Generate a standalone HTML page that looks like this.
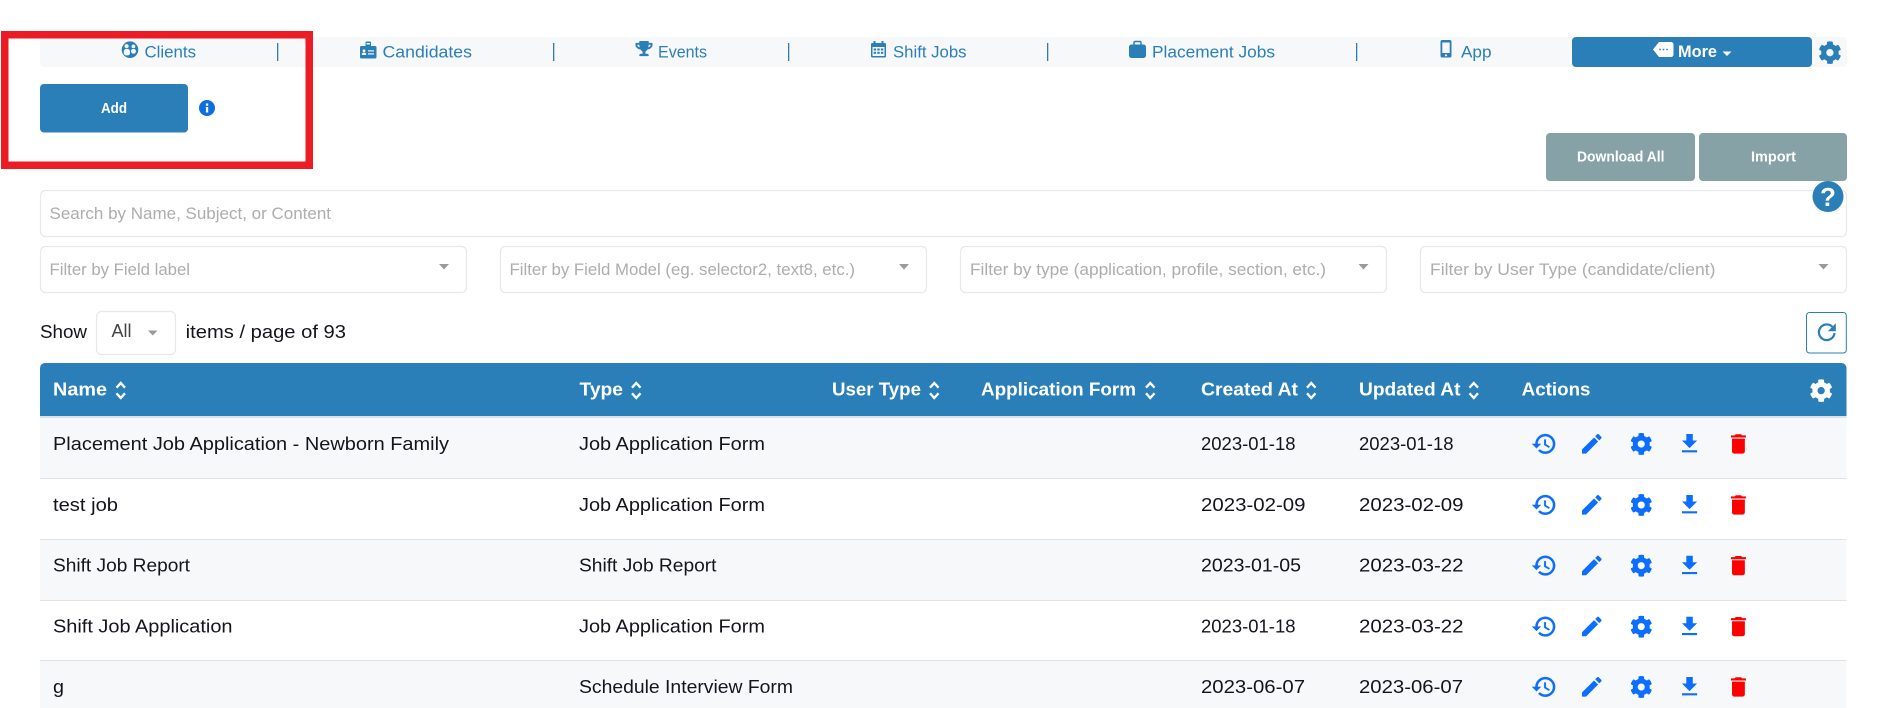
<!DOCTYPE html>
<html lang="en">
<head>
<meta charset="utf-8">
<title>Forms</title>
<style>
html,body{margin:0;padding:0;background:#fff;width:1885px;height:708px;overflow:hidden}
svg{display:block}
text{font-family:"Liberation Sans",sans-serif}
.nav{font-size:17px;fill:#2a7fb8}
.ph{font-size:17px;fill:#adadad}
.b{font-size:18px;fill:#14141c}
.h{font-size:18px;font-weight:700;fill:#fff}
.w{font-size:14.500px;font-weight:700;fill:#fff}
.s{fill:none;stroke:#fff;stroke-width:2.300}
.bd{fill:#fff;stroke:#e6e8ec;stroke-width:1.200}
</style>
</head>
<body>
<svg xmlns="http://www.w3.org/2000/svg" width="1885" height="708" viewBox="0 0 1885 708">
<defs>
<path id="cog" d="M487.4 315.7l-42.6-24.6c4.3-23.2 4.3-47 0-70.2l42.6-24.6c4.9-2.8 7.1-8.6 5.5-14-11.1-35.6-30-67.8-54.7-94.6-3.8-4.1-10-5.1-14.8-2.3L380.8 110c-17.9-15.4-38.5-27.3-60.8-35.1V25.8c0-5.6-3.9-10.5-9.4-11.7-36.7-8.2-74.3-7.8-109.2 0-5.5 1.2-9.4 6.1-9.4 11.7V75c-22.2 7.9-42.8 19.8-60.8 35.1L88.7 85.5c-4.9-2.8-11-1.9-14.8 2.3-24.7 26.7-43.6 58.9-54.7 94.6-1.7 5.4.6 11.2 5.5 14L67.3 221c-4.3 23.2-4.3 47 0 70.2l-42.6 24.6c-4.9 2.8-7.1 8.6-5.5 14 11.1 35.6 30 67.8 54.7 94.6 3.8 4.1 10 5.1 14.8 2.3l42.6-24.6c17.9 15.4 38.5 27.3 60.8 35.1v49.2c0 5.6 3.9 10.5 9.4 11.7 36.7 8.2 74.3 7.8 109.2 0 5.5-1.2 9.4-6.1 9.4-11.7v-49.2c22.2-7.9 42.8-19.8 60.8-35.1l42.6 24.6c4.9 2.8 11 1.9 14.8-2.3 24.7-26.7 43.6-58.9 54.7-94.6 1.5-5.5-.7-11.3-5.6-14.1zM256 336c-44.1 0-80-35.9-80-80s35.9-80 80-80 80 35.9 80 80-35.9 80-80 80z"/>
<g id="acts">
<path transform="translate(1531 430.7) scale(1.1)" fill="#0d6efd" stroke="#0d6efd" stroke-width=".3" d="M13 3c-4.97 0-9 4.03-9 9H1l3.89 3.89.07.14L9 12H6c0-3.87 3.13-7 7-7s7 3.13 7 7-3.13 7-7 7c-1.93 0-3.68-.79-4.94-2.06l-1.42 1.42C8.27 19.99 10.51 21 13 21c4.97 0 9-4.03 9-9s-4.03-9-9-9zm-1 5v5l4.28 2.54.72-1.21-3.5-2.08V8H12z"/>
<path transform="translate(1578.7 430.7) scale(1.09)" fill="#0d6efd" d="M3 17.25V21h3.75L17.81 9.94l-3.75-3.75L3 17.25zM20.71 7.04c.39-.39.39-1.02 0-1.41l-2.34-2.34c-.39-.39-1.02-.39-1.41 0l-1.83 1.83 3.75 3.75 1.83-1.83z"/>
<use href="#cog" transform="translate(1630 432.7) scale(.044)" fill="#0d6efd"/>
<path transform="translate(1676.6 430.8) scale(1.08)" fill="#0d6efd" d="M19 9h-4V3H9v6H5l7 7 7-7zM5 18v2h14v-2H5z"/>
<path transform="translate(1725.6 431.1) scale(1.07)" fill="#ff0000" d="M6 19c0 1.1.9 2 2 2h8c1.1 0 2-.9 2-2V7H6v12zM19 4h-3.5l-1-1h-5l-1 1H5v2h14V4z"/>
</g>
<g id="sort"><path class="s" d="M1 7.2 5.25 2.5 9.5 7.2M1 12.8 5.25 17.5 9.5 12.8"/></g>
</defs>

<!-- nav -->
<rect x="40" y="37" width="1807" height="30" rx="4" fill="#f7f8fa"/>
<g fill="#2a7fb8">
<rect x="277" y="43" width="1.3" height="18"/>
<rect x="553" y="43" width="1.3" height="18"/>
<rect x="788" y="43" width="1.3" height="18"/>
<rect x="1047" y="43" width="1.3" height="18"/>
<rect x="1356" y="43" width="1.3" height="18"/>
<!-- clients -->
<circle cx="130" cy="49.7" r="8.3"/>
<!-- candidates -->
<rect x="360" y="46" width="16.5" height="12.5" rx="1.5"/>
<rect x="365.5" y="41.5" width="5.5" height="6" rx="1"/>
<!-- trophy -->
<path transform="translate(635.5 41) scale(.0295)" fill-rule="evenodd" d="M552 64H448V24c0-13.3-10.7-24-24-24H152c-13.3 0-24 10.7-24 24v40H24C10.7 64 0 74.7 0 88v56c0 35.7 22.5 72.4 61.9 100.7 31.5 22.7 69.8 37.1 110 41.7C203.3 338.5 240 360 240 360v72h-48c-35.3 0-64 20.7-64 56v12c0 6.6 5.4 12 12 12h296c6.6 0 12-5.4 12-12v-12c0-35.3-28.7-56-64-56h-48v-72s36.7-21.5 68.1-73.6c40.3-4.6 78.6-19 110-41.7 39.3-28.3 61.9-65 61.9-100.7V88c0-13.3-10.7-24-24-24zM99.3 192.8C74.9 175.2 64 155.6 64 144v-16h64.2c1 32.6 5.8 61.2 12.8 86.2-15.1-5.2-29.2-12.4-41.7-21.4zM512 144c0 16.1-17.7 36.1-35.3 48.8-12.7 9.1-26.9 16.3-42 21.5 7-25 11.8-53.6 12.8-86.3H512v16z"/>
<!-- calendar -->
<rect x="871" y="43" width="15" height="14.5" rx="1.5"/>
<rect x="873.5" y="41" width="2" height="3"/>
<rect x="881.5" y="41" width="2" height="3"/>
<!-- briefcase -->
<rect x="1129" y="44.5" width="17" height="13.5" rx="2.5"/>
<path d="M1134 45v-2.3c0-.7.5-1.2 1.2-1.2h4.6c.7 0 1.2.5 1.2 1.2v2.3" fill="none" stroke="#2a7fb8" stroke-width="1.4"/>
<!-- mobile -->
<rect x="1440.5" y="40" width="11" height="17.5" rx="1.8"/>
</g>
<!-- clients cutouts -->
<g fill="#f7f8fa">
<circle cx="126.6" cy="46.2" r="2.1"/><circle cx="133.4" cy="46.4" r="1.9"/>
<rect x="123.8" y="49" width="6.2" height="6.4" rx="2.4"/>
<rect x="131" y="49" width="4.9" height="4.6" rx="2.1"/>
<!-- badge -->
<rect x="366.500" y="43" width="3.500" height="1.500"/>
<circle cx="364" cy="50.800" r="1.400"/>
<path d="M361.800 55v-1c0-.8.8-1.400 2.200-1.400s2.200.6 2.200 1.400v1z"/>
<rect x="368" y="50.300" width="6" height="1.200"/>
<rect x="368" y="53.300" width="6" height="1.200"/>
<!-- calendar cells -->
<rect x="872.500" y="47" width="12" height="9"/>
<!-- mobile screen -->
<rect x="1442.300" y="42.500" width="7.400" height="10.500"/>
<circle cx="1446" cy="55.300" r="1.100"/>
</g>
<g fill="#2a7fb8">
<rect x="873.700" y="48.500" width="2.400" height="2"/><rect x="877.300" y="48.500" width="2.400" height="2"/><rect x="880.900" y="48.500" width="2.400" height="2"/>
<rect x="873.700" y="51.800" width="2.400" height="2"/><rect x="877.300" y="51.800" width="2.400" height="2"/><rect x="880.900" y="51.800" width="2.400" height="2"/>
</g>
<text class="nav" x="144.500" y="57.500" textLength="51.500" lengthAdjust="spacingAndGlyphs">Clients</text>
<text class="nav" x="382.500" y="57.500" textLength="89.500" lengthAdjust="spacingAndGlyphs">Candidates</text>
<text class="nav" x="658" y="57.500" textLength="49" lengthAdjust="spacingAndGlyphs">Events</text>
<text class="nav" x="893" y="57.500" textLength="73.500" lengthAdjust="spacingAndGlyphs">Shift Jobs</text>
<text class="nav" x="1152" y="57.500" textLength="123" lengthAdjust="spacingAndGlyphs">Placement Jobs</text>
<text class="nav" x="1461" y="57.500" textLength="30.500" lengthAdjust="spacingAndGlyphs">App</text>

<!-- more -->
<rect x="1572" y="37" width="240" height="30" rx="4" fill="#2a7fb8"/>
<path fill="#fff" d="M1653 49.500 1659 42h12c1.400 0 2.500 1.100 2.500 2.500v10c0 1.400-1.100 2.500-2.500 2.500h-12z"/>
<g fill="#2a7fb8"><circle cx="1660" cy="49.500" r=".9"/><circle cx="1663.500" cy="49.500" r=".9"/><circle cx="1667" cy="49.500" r=".9"/></g>
<text x="1678" y="57" font-size="17" font-weight="700" fill="#fff" textLength="39" lengthAdjust="spacingAndGlyphs">More</text>
<path fill="#fff" d="M1722.500 51.500h9l-4.500 4.500z"/>
<use href="#cog" transform="translate(1818.300 41) scale(.0455)" fill="#2a7fb8"/>

<!-- add -->
<rect x="40" y="84" width="148" height="48.500" rx="4" fill="#2a7fb8"/>
<text class="w" x="101" y="113" textLength="26" lengthAdjust="spacingAndGlyphs">Add</text>
<circle cx="207" cy="108" r="8" fill="#0d6ede"/>
<rect x="205.900" y="107" width="2.300" height="5.500" fill="#fff"/>
<rect x="205.900" y="103.500" width="2.300" height="2.300" fill="#fff"/>

<!-- download/import -->
<rect x="1546" y="133" width="149" height="48" rx="4" fill="#86a2a7"/>
<rect x="1699" y="133" width="148" height="48" rx="4" fill="#86a2a7"/>
<text class="w" x="1577" y="161.500" textLength="87.500" lengthAdjust="spacingAndGlyphs">Download All</text>
<text class="w" x="1751" y="161.500" textLength="45" lengthAdjust="spacingAndGlyphs">Import</text>

<!-- search -->
<rect class="bd" x="40.500" y="190.500" width="1806" height="46" rx="5"/>
<text class="ph" x="49.500" y="219" textLength="281.500" lengthAdjust="spacingAndGlyphs">Search by Name, Subject, or Content</text>
<ellipse cx="1828" cy="196.500" rx="15.500" ry="15.500" fill="#2a7fb8"/>
<text x="1828" y="206" text-anchor="middle" font-size="26" font-weight="700" fill="#fff">?</text>

<!-- filters -->
<rect class="bd" x="40.500" y="246.500" width="426" height="46" rx="5"/>
<rect class="bd" x="500.500" y="246.500" width="426" height="46" rx="5"/>
<rect class="bd" x="960.500" y="246.500" width="426" height="46" rx="5"/>
<rect class="bd" x="1420.500" y="246.500" width="426" height="46" rx="5"/>
<text class="ph" x="49.500" y="275" textLength="140.500" lengthAdjust="spacingAndGlyphs">Filter by Field label</text>
<text class="ph" x="509.500" y="275" textLength="345.500" lengthAdjust="spacingAndGlyphs">Filter by Field Model (eg. selector2, text8, etc.)</text>
<text class="ph" x="970" y="275" textLength="356" lengthAdjust="spacingAndGlyphs">Filter by type (application, profile, section, etc.)</text>
<text class="ph" x="1430" y="275" textLength="285.500" lengthAdjust="spacingAndGlyphs">Filter by User Type (candidate/client)</text>
<g fill="#999">
<path d="M439 264h10l-5 5.500z"/>
<path d="M899 264h10l-5 5.500z"/>
<path d="M1358.500 264h10l-5 5.500z"/>
<path d="M1818.500 264h10l-5 5.500z"/>
</g>

<!-- show -->
<text class="b" x="40" y="338" textLength="47" lengthAdjust="spacingAndGlyphs">Show</text>
<rect class="bd" x="96.500" y="311.500" width="79" height="43" rx="5"/>
<text x="111.500" y="337" font-size="18" fill="#444" textLength="20" lengthAdjust="spacingAndGlyphs">All</text>
<path fill="#999" d="M148 330.500h9.500l-4.750 5z"/>
<text class="b" x="185.700" y="338" textLength="160.300" lengthAdjust="spacingAndGlyphs">items / page of 93</text>

<!-- refresh -->
<rect x="1806.500" y="312.500" width="39.800" height="40.500" rx="3" fill="#fff" stroke="#2a7fb8" stroke-width="1"/>
<path fill="none" stroke="#2a7fb8" stroke-width="2.200" d="M1832.300 326.800a7.800 7.800 0 1 0 2.200 6.200"/>
<path fill="#2a7fb8" d="M1835.800 323.300v8h-8z"/>

<!-- table -->
<rect x="40" y="418" width="1806.500" height="61" fill="#f7f8fa"/>
<rect x="40" y="539.500" width="1806.500" height="61" fill="#f7f8fa"/>
<rect x="40" y="660.500" width="1806.500" height="48" fill="#f7f8fa"/>
<path fill="#2a7fb8" d="M40 416v-48a5 5 0 0 1 5-5h1796.500a5 5 0 0 1 5 5v48z"/>
<rect x="40" y="416" width="1806.500" height="2" fill="#dee2e6"/>
<g fill="#dee2e6">
<rect x="40" y="478" width="1806.500" height="1"/>
<rect x="40" y="539" width="1806.500" height="1"/>
<rect x="40" y="600" width="1806.500" height="1"/>
<rect x="40" y="660" width="1806.500" height="1"/>
</g>

<text class="h" x="53" y="395.500" textLength="54" lengthAdjust="spacingAndGlyphs">Name</text>
<text class="h" x="579.500" y="395.500" textLength="43.500" lengthAdjust="spacingAndGlyphs">Type</text>
<text class="h" x="832" y="395.500" textLength="89" lengthAdjust="spacingAndGlyphs">User Type</text>
<text class="h" x="981" y="395.500" textLength="155" lengthAdjust="spacingAndGlyphs">Application Form</text>
<text class="h" x="1201" y="395.500" textLength="97" lengthAdjust="spacingAndGlyphs">Created At</text>
<text class="h" x="1359" y="395.500" textLength="101.500" lengthAdjust="spacingAndGlyphs">Updated At</text>
<text class="h" x="1521.700" y="395.500" textLength="68.800" lengthAdjust="spacingAndGlyphs">Actions</text>
<use href="#sort" x="115.500" y="380.500"/>
<use href="#sort" x="631" y="380.500"/>
<use href="#sort" x="929" y="380.500"/>
<use href="#sort" x="1145" y="380.500"/>
<use href="#sort" x="1306" y="380.500"/>
<use href="#sort" x="1468.500" y="380.500"/>
<use href="#cog" transform="translate(1809.500 379) scale(.0455)" fill="#fff"/>

<!-- rows -->
<text class="b" x="53" y="450" textLength="396" lengthAdjust="spacingAndGlyphs">Placement Job Application - Newborn Family</text>
<text class="b" x="579" y="450" textLength="186" lengthAdjust="spacingAndGlyphs">Job Application Form</text>
<text class="b" x="1201" y="450" textLength="94.500" lengthAdjust="spacingAndGlyphs">2023-01-18</text>
<text class="b" x="1359" y="450" textLength="94.500" lengthAdjust="spacingAndGlyphs">2023-01-18</text>
<use href="#acts"/>

<text class="b" x="53" y="511" textLength="65" lengthAdjust="spacingAndGlyphs">test job</text>
<text class="b" x="579" y="511" textLength="186" lengthAdjust="spacingAndGlyphs">Job Application Form</text>
<text class="b" x="1201" y="511" textLength="104.500" lengthAdjust="spacingAndGlyphs">2023-02-09</text>
<text class="b" x="1359" y="511" textLength="104.500" lengthAdjust="spacingAndGlyphs">2023-02-09</text>
<use href="#acts" y="61"/>

<text class="b" x="53" y="571.500" textLength="137" lengthAdjust="spacingAndGlyphs">Shift Job Report</text>
<text class="b" x="579" y="571.500" textLength="137.500" lengthAdjust="spacingAndGlyphs">Shift Job Report</text>
<text class="b" x="1201" y="571.500" textLength="100" lengthAdjust="spacingAndGlyphs">2023-01-05</text>
<text class="b" x="1359" y="571.500" textLength="104.500" lengthAdjust="spacingAndGlyphs">2023-03-22</text>
<use href="#acts" y="121.700"/>

<text class="b" x="53" y="632.500" textLength="179.500" lengthAdjust="spacingAndGlyphs">Shift Job Application</text>
<text class="b" x="579" y="632.500" textLength="186" lengthAdjust="spacingAndGlyphs">Job Application Form</text>
<text class="b" x="1201" y="632.500" textLength="94.500" lengthAdjust="spacingAndGlyphs">2023-01-18</text>
<text class="b" x="1359" y="632.500" textLength="104.500" lengthAdjust="spacingAndGlyphs">2023-03-22</text>
<use href="#acts" y="182.700"/>

<text class="b" x="53" y="693" textLength="11" lengthAdjust="spacingAndGlyphs">g</text>
<text class="b" x="579" y="693" textLength="214" lengthAdjust="spacingAndGlyphs">Schedule Interview Form</text>
<text class="b" x="1201" y="693" textLength="104" lengthAdjust="spacingAndGlyphs">2023-06-07</text>
<text class="b" x="1359" y="693" textLength="104" lengthAdjust="spacingAndGlyphs">2023-06-07</text>
<use href="#acts" y="243"/>

<!-- red annotation box -->
<rect x="4.750" y="34.750" width="304.500" height="130.500" fill="none" stroke="#ed1c24" stroke-width="7.500"/>
</svg>
</body>
</html>
